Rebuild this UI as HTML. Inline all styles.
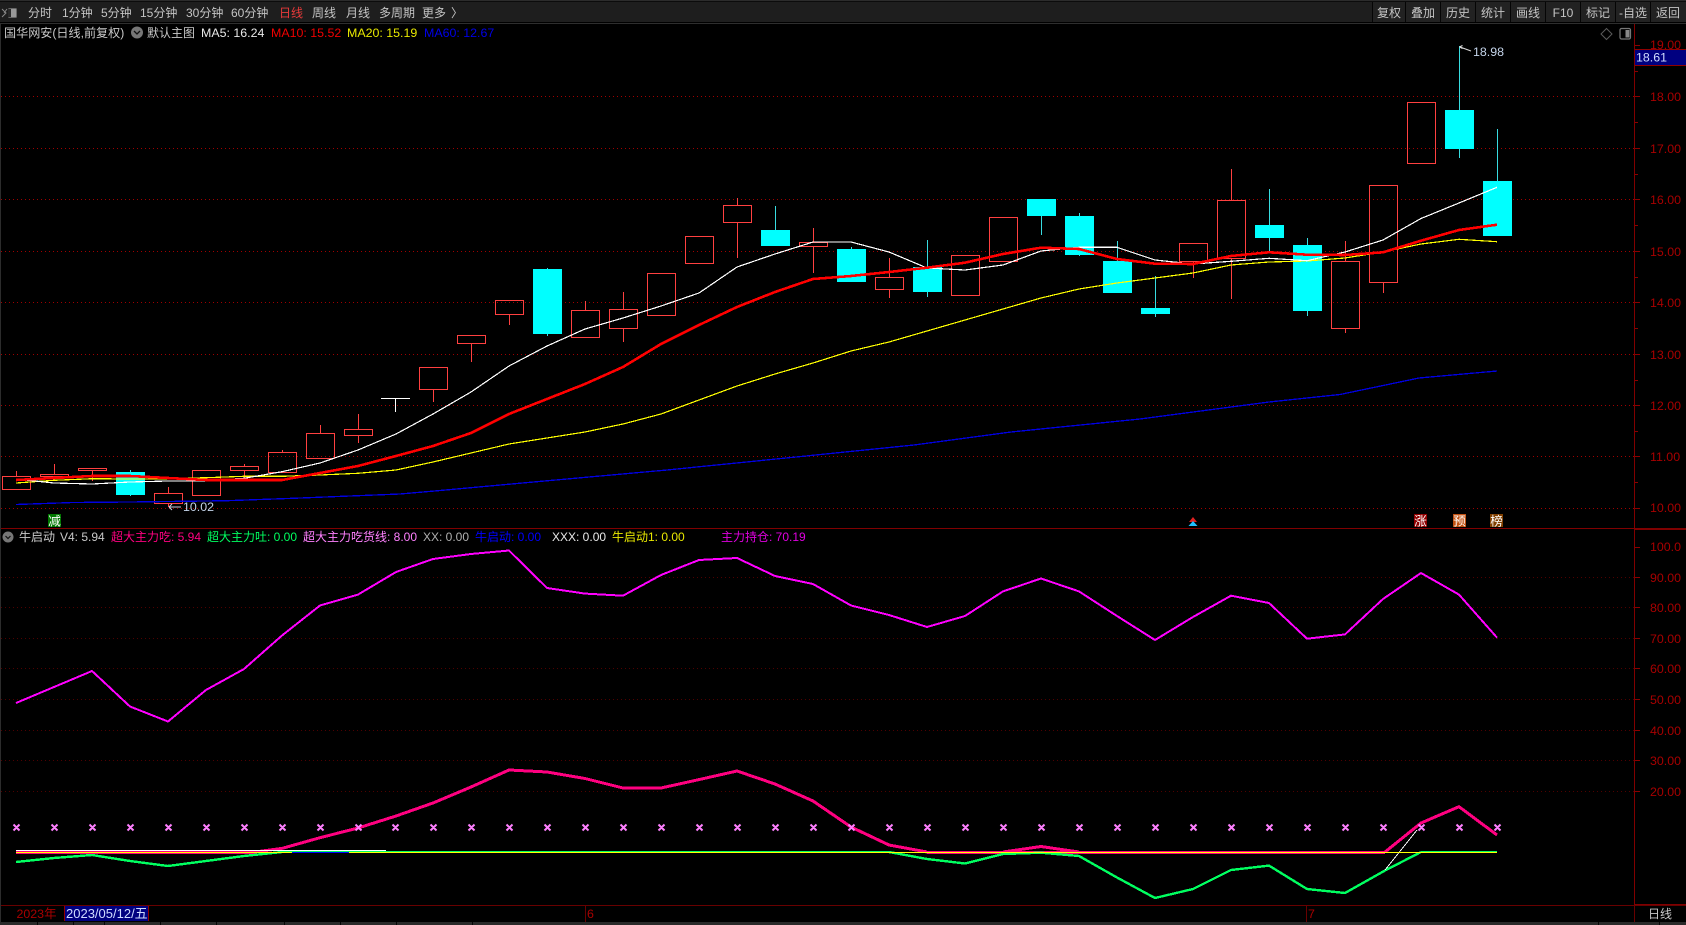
<!DOCTYPE html>
<html><head><meta charset="utf-8"><title>国华网安</title>
<style>
html,body{margin:0;padding:0;background:#000;width:1686px;height:925px;overflow:hidden}
svg{display:block;font-family:"Liberation Sans","Noto Sans CJK SC",sans-serif;font-size:12.4px}
.c{shape-rendering:crispEdges}
.ax{fill:#a80000;font-size:12.4px}
.tb{fill:#c4c4c4;font-size:12px}
.mid{text-anchor:middle}
</style></head><body>
<svg width="1686" height="925" viewBox="0 0 1686 925" xmlns="http://www.w3.org/2000/svg">
<rect width="1686" height="925" fill="#000"/>
<!-- top bar -->
<g class="c">
<rect width="1686" height="22" fill="#1e1e1e"/>
<rect width="1686" height="1" fill="#2c2c2c"/>
<rect y="1" width="1686" height="1" fill="#0c0c0c"/>
<rect y="22" width="1686" height="1" fill="#000"/>
<rect y="23" width="1686" height="1" fill="#2e2e2e"/>
<rect x="1372" y="2" width="314" height="20" fill="#222"/>
<path d="M1372.5 2V22M1405.5 2V22M1440.5 2V22M1475.5 2V22M1510.5 2V22M1545.5 2V22M1580.5 2V22M1615.5 2V22M1650.5 2V22" stroke="#050505"/>
</g>
<path d="M2 9l4 4-4 4M7 9l-3 4" fill="none" stroke="#888" stroke-width="1"/>
<rect x="8.5" y="8.5" width="8" height="9" fill="#999" stroke="#666" rx="1"/>
<rect x="8" y="9" width="3" height="8" fill="#2a2a2a"/>
<g class="tb">
<text x="28" y="17">分时</text><text x="62" y="17">1分钟</text><text x="101" y="17">5分钟</text><text x="140" y="17">15分钟</text><text x="186" y="17">30分钟</text><text x="231" y="17">60分钟</text><text x="279" y="17" style="fill:#e83a3a">日线</text><text x="312" y="17">周线</text><text x="346" y="17">月线</text><text x="379" y="17">多周期</text><text x="422" y="17">更多</text><text x="451" y="17">〉</text>
<text x="1389" y="17" class="mid">复权</text><text x="1423" y="17" class="mid">叠加</text><text x="1458" y="17" class="mid">历史</text><text x="1493" y="17" class="mid">统计</text><text x="1528" y="17" class="mid">画线</text><text x="1563" y="17" class="mid">F10</text><text x="1598" y="17" class="mid">标记</text><text x="1633" y="17" class="mid">-自选</text><text x="1668" y="17" class="mid">返回</text>
</g>
<!-- header row -->
<text x="4" y="37" fill="#c8c8c8" font-size="12.1">国华网安(日线,前复权)</text>
<circle cx="137" cy="32.5" r="6" fill="#777"/>
<path d="M134 31l3 3 3-3" fill="none" stroke="#111" stroke-width="1.3"/>
<text x="147" y="37" fill="#c8c8c8" font-size="12">默认主图</text>
<text x="201" y="37" fill="#e8e8e8">MA5: 16.24</text>
<text x="271" y="37" fill="#f00000">MA10: 15.52</text>
<text x="347" y="37" fill="#e8e800">MA20: 15.19</text>
<text x="424" y="37" fill="#0000e8">MA60: 12.67</text>
<path d="M1606.5 28.5l5.5 5.5-5.5 5.5-5.5-5.5z" fill="none" stroke="#5a5a5a"/>
<rect x="1620" y="28.5" width="10.5" height="10.5" rx="1.5" fill="none" stroke="#777" stroke-width="1.2"/>
<rect x="1625.5" y="30" width="4" height="7.5" fill="#888"/>
<!-- grids -->
<g class="c" fill="none">
<path d="M1 96.5H1634M1 148.5H1634M1 199.5H1634M1 251.5H1634M1 302.5H1634M1 354.5H1634M1 405.5H1634M1 456.5H1634M1 508.5H1634" stroke="#a00000" stroke-dasharray="1 3"/>
<path d="M1 577.5H1634M1 607.5H1634M1 638.5H1634M1 668.5H1634M1 699.5H1634M1 730.5H1634M1 760.5H1634M1 791.5H1634" stroke="#500000" stroke-dasharray="1 3"/>
<path d="M1634.5 24V922M0 528.5H1686M1635 529.5H1686M1635 904.5H1686" stroke="#800000"/>
<path d="M0 905.5H1686" stroke="#680000"/>
<path d="M0.5 24V922" stroke="#2c2c2c"/>
<path d="M1635 45.5h5M1635 96.5h5M1635 148.5h5M1635 199.5h5M1635 251.5h5M1635 302.5h5M1635 354.5h5M1635 405.5h5M1635 456.5h5M1635 508.5h5M1635 71.5h3M1635 122.5h3M1635 174.5h3M1635 225.5h3M1635 277.5h3M1635 328.5h3M1635 380.5h3M1635 431.5h3M1635 482.5h3M1635 547.5h5M1635 577.5h5M1635 607.5h5M1635 638.5h5M1635 668.5h5M1635 699.5h5M1635 730.5h5M1635 760.5h5M1635 791.5h5" stroke="#8c0000"/>
</g>
<!-- price axis labels -->
<g class="ax">
<text x="1650" y="49">19.00</text><text x="1650" y="101">18.00</text><text x="1650" y="153">17.00</text><text x="1650" y="204">16.00</text><text x="1650" y="256">15.00</text><text x="1650" y="307">14.00</text><text x="1650" y="359">13.00</text><text x="1650" y="410">12.00</text><text x="1650" y="461">11.00</text><text x="1650" y="512">10.00</text>
<text x="1650" y="551">100.0</text><text x="1650" y="582">90.00</text><text x="1650" y="612">80.00</text><text x="1650" y="643">70.00</text><text x="1650" y="673">60.00</text><text x="1650" y="704">50.00</text><text x="1650" y="735">40.00</text><text x="1650" y="765">30.00</text><text x="1650" y="796">20.00</text>
</g>
<g class="c">
<rect x="1635" y="50" width="51" height="15" fill="#000080"/>
<path d="M1635 49.5H1686M1635 65.5H1686" stroke="#900000"/>
</g>
<text x="1636" y="61.5" fill="#d0dcff">18.61</text>
<!-- candles -->
<g class="c" fill="none">
<path stroke="#ff4040" d="M2.5 476.5h28v13h-28zM16.5 471V476M40.5 474.5h28v2h-28zM54.5 464V474M78.5 468.5h28v2h-28zM92.5 471V481M154.5 493.5h28v10h-28zM168.5 487V493M168.5 504V507M192.5 470.5h28v25h-28zM230.5 466.5h28v4h-28zM244.5 464V466M244.5 471V480M268.5 452.5h28v20h-28zM282.5 450V452M306.5 433.5h28v25h-28zM320.5 425V433M344.5 429.5h28v6h-28zM358.5 414V429M358.5 436V443M419.5 367.5h28v22h-28zM433.5 390V402M457.5 335.5h28v8h-28zM471.5 344V362M495.5 300.5h28v14h-28zM509.5 315V325M571.5 310.5h28v27h-28zM585.5 301V310M609.5 309.5h28v19h-28zM623.5 292V309M623.5 329V342M647.5 273.5h28v42h-28zM685.5 236.5h28v27h-28zM723.5 205.5h28v17h-28zM737.5 198V205M737.5 223V258M799.5 242.5h28v4h-28zM813.5 228V242M813.5 247V273M875.5 277.5h28v12h-28zM889.5 258V277M889.5 290V298M951.5 255.5h28v40h-28zM989.5 217.5h28v44h-28zM1179.5 243.5h28v18h-28zM1193.5 262V278M1217.5 200.5h28v58h-28zM1231.5 169V200M1231.5 259V299M1331.5 261.5h28v67h-28zM1345.5 241V261M1345.5 329V333M1369.5 185.5h28v97h-28zM1383.5 283V293M1407.5 102.5h28v61h-28z"/>
<path stroke="#fff" d="M381 398.5h29M395.5 399V412"/>
<path stroke="#38dce0" d="M130.5 470V496M547.5 268V336M775.5 206V230M851.5 247V249M927.5 240V297M1041.5 216V235M1079.5 213V256M1117.5 241V261M1155.5 276V317M1269.5 189V252M1307.5 238V316M1459.5 46V110M1459.5 149V158M1497.5 129V181"/>
</g>
<g class="c" fill="#00ffff">
<rect x="116" y="472" width="29" height="23"/><rect x="533" y="269" width="29" height="65"/><rect x="761" y="230" width="29" height="16"/><rect x="837" y="249" width="29" height="33"/><rect x="913" y="267" width="29" height="25"/><rect x="1027" y="199" width="29" height="17"/><rect x="1065" y="216" width="29" height="39"/><rect x="1103" y="261" width="29" height="32"/><rect x="1141" y="308" width="29" height="6"/><rect x="1255" y="225" width="29" height="13"/><rect x="1293" y="245" width="29" height="66"/><rect x="1445" y="110" width="29" height="39"/><rect x="1483" y="181" width="29" height="55"/>
</g>
<!-- MA lines -->
<g class="c" fill="none" stroke-linejoin="round">
<polyline stroke="#0000e0" stroke-width="1.3" points="16,504.5 73,502.5 130,502 227,500.7 293,498.3 400,494 430,491.4 548,480.7 667,470 796,457 914,445 1011,432 1140,419 1269,402 1340,394.5 1419,378 1497,371"/>
<polyline stroke="#ffff00" stroke-width="1.2" points="16,483 54,480.3 92,478.7 130,479 168,478.7 206,477.7 244,476.3 282,476.3 320,475 358,473.3 396,470 433,462 471,453 509,444 547,438 585,432 623,424 661,414 699,400 737,386 775,374 813,363 851,351 889,342 927,331 965,320 1003,309 1041,298 1079,289 1117,283 1155,278 1193,273 1231,265 1269,262 1307,261 1345,258 1383,252 1421,244 1459,239.3 1497,241.7"/>
<polyline stroke="#ffffff" stroke-width="1.2" points="16,479 54,483 92,484 130,482 168,481 206,480.7 244,478.3 282,471.7 320,463 358,450 396,434 433,414 471,392 509,366 547,346 585,329 623,318 661,306 699,293 737,267 775,254 813,242 851,242 889,252 927,268 965,270 1003,265 1041,251 1079,247.3 1117,247.3 1155,260 1193,264 1231,261.3 1269,258.3 1307,260.7 1345,252 1383,240 1421,218.5 1459,203 1497,187.3"/>
<polyline stroke="#ff0000" stroke-width="2.6" points="16,480 54,478 92,476 130,476 168,478 206,480 244,480 282,480 320,473 358,466 396,456 433,446 471,433 509,414 547,399 585,384 623,367 661,344 699,325 737,307 775,292 813,279 851,276 889,272 927,267.7 965,262.7 1003,254 1041,247.7 1079,249 1117,259 1155,263.7 1193,264 1231,256 1269,252.3 1307,254.7 1345,255 1383,252.3 1421,240.7 1459,230 1497,224.7"/>
</g>
<!-- annotations -->
<path d="M1459.5 47l3-1.5M1459.5 47l3 1.5M1460 47l11 4" fill="none" stroke="#ddd"/>
<text x="1473" y="56" fill="#c4d4ea">18.98</text>
<path d="M169 507h12M169 507l3-3M169 507l3 3" fill="none" stroke="#ccd"/>
<text x="183" y="511" fill="#c4d4ea">10.02</text>
<g class="c">
<rect x="48" y="514" width="13" height="13" fill="#007800"/>
<rect x="1414" y="514" width="13" height="13" fill="#900000"/>
<rect x="1453" y="514" width="13" height="13" fill="#c05010"/>
<rect x="1490" y="514" width="13" height="13" fill="#804000"/>
</g>
<g fill="#fff" font-size="12.5" text-anchor="middle">
<text x="54.5" y="525.5">减</text><text x="1420.5" y="525.5">涨</text><text x="1459.5" y="525.5">预</text><text x="1496.5" y="525.5">榜</text>
</g>
<path d="M1193 517l4 5h-8z" fill="#e02020"/>
<path d="M1193 521l4.5 5h-9z" fill="#20c0ff"/>
<!-- lower header -->
<circle cx="8" cy="537" r="5.5" fill="#777"/>
<path d="M5.5 536l2.5 2.5 2.5-2.5" fill="none" stroke="#111" stroke-width="1.2"/>
<g font-size="12">
<text x="19" y="541" fill="#c8c8c8">牛启动</text>
<text x="60" y="541" fill="#c8c8c8">V4: 5.94</text>
<text x="111" y="541" fill="#ff0080">超大主力吃: 5.94</text>
<text x="207" y="541" fill="#00ff60">超大主力吐: 0.00</text>
<text x="303" y="541" fill="#ff80ff">超大主力吃货线: 8.00</text>
<text x="423" y="541" fill="#b0b0b0">XX: 0.00</text>
<text x="475" y="541" fill="#0000ff">牛启动: 0.00</text>
<text x="552" y="541" fill="#e8e8e8">XXX: 0.00</text>
<text x="612" y="541" fill="#e8e800">牛启动1: 0.00</text>
<text x="721" y="541" fill="#e000e0">主力持仓: 70.19</text>
</g>
<!-- lower lines -->
<g class="c" fill="none" stroke-linejoin="round">
<polyline stroke="#ff00ff" stroke-width="2" points="16,703 54,687 92,671 130,706.5 168,721.5 206,690 244,669 282,635.5 320,605.5 358,594.6 396,572 433,559 471,554 509,550.5 547,588 585,593.6 623,595.7 661,575 699,560 737,558 775,576 813,584 851,605.5 889,615 927,627 965,616 1003,591.4 1041,578.5 1079,591.4 1117,616 1155,640 1193,617 1231,595.7 1269,603 1307,638.7 1345,634.4 1383,599 1421,573 1459,594.6 1497,637.6"/>
<path stroke="#ff0080" stroke-width="3" d="M16 852.5H255M927 852.5H1385"/>
<polyline stroke="#ff0080" stroke-width="3" points="255,852 282,848.4 320,837.7 358,828 396,816 433,803 471,787 509,770 547,772 585,778.5 623,788 661,788 699,779.6 737,771 775,784 813,801 851,827 889,845 927,852"/>
<polyline stroke="#ff0080" stroke-width="3" points="1003,852 1041,846.5 1079,852"/>
<polyline stroke="#ff0080" stroke-width="3" points="1385,852 1421,823 1459,806.7 1497,835"/>
<polyline stroke="#00ff60" stroke-width="2.4" points="16,862 54,858 92,855 130,861 168,866 206,861 244,856 282,852"/>
<path stroke="#00ff60" d="M282 851.5H889M1421 851.5H1497"/>
<polyline stroke="#00ff60" stroke-width="2.4" points="889,852 927,859 965,863.5 1003,854 1041,852.7 1079,856 1117,877.5 1155,898 1193,889 1231,870 1269,865.6 1307,889 1345,893 1385,870.5 1421,852"/>
<path stroke="#ffffff" d="M16 850.5H386M1385 870L1417 830"/>
<path stroke="#ffff00" d="M16 852.5H1497"/>
<path stroke="#0000ff" d="M292 852.5H349"/>
</g>
<path fill="none" stroke="#ff80ff" stroke-width="2" d="M13.5 824.5l6 6m0-6l-6 6M51.5 824.5l6 6m0-6l-6 6M89.5 824.5l6 6m0-6l-6 6M127.5 824.5l6 6m0-6l-6 6M165.5 824.5l6 6m0-6l-6 6M203.5 824.5l6 6m0-6l-6 6M241.5 824.5l6 6m0-6l-6 6M279.5 824.5l6 6m0-6l-6 6M317.5 824.5l6 6m0-6l-6 6M355.5 824.5l6 6m0-6l-6 6M392.5 824.5l6 6m0-6l-6 6M430.5 824.5l6 6m0-6l-6 6M468.5 824.5l6 6m0-6l-6 6M506.5 824.5l6 6m0-6l-6 6M544.5 824.5l6 6m0-6l-6 6M582.5 824.5l6 6m0-6l-6 6M620.5 824.5l6 6m0-6l-6 6M658.5 824.5l6 6m0-6l-6 6M696.5 824.5l6 6m0-6l-6 6M734.5 824.5l6 6m0-6l-6 6M772.5 824.5l6 6m0-6l-6 6M810.5 824.5l6 6m0-6l-6 6M848.5 824.5l6 6m0-6l-6 6M886.5 824.5l6 6m0-6l-6 6M924.5 824.5l6 6m0-6l-6 6M962.5 824.5l6 6m0-6l-6 6M1000.5 824.5l6 6m0-6l-6 6M1038.5 824.5l6 6m0-6l-6 6M1076.5 824.5l6 6m0-6l-6 6M1114.5 824.5l6 6m0-6l-6 6M1152.5 824.5l6 6m0-6l-6 6M1190.5 824.5l6 6m0-6l-6 6M1228.5 824.5l6 6m0-6l-6 6M1266.5 824.5l6 6m0-6l-6 6M1304.5 824.5l6 6m0-6l-6 6M1342.5 824.5l6 6m0-6l-6 6M1380.5 824.5l6 6m0-6l-6 6M1418.5 824.5l6 6m0-6l-6 6M1456.5 824.5l6 6m0-6l-6 6M1494.5 824.5l6 6m0-6l-6 6"/>
<!-- bottom date row -->
<g class="c">
<rect x="65" y="906" width="83" height="15" fill="#000080"/>
<path d="M64.5 906V921M148.5 906V921" stroke="#900000"/>
<path d="M585.5 906V922M1306.5 906V922M1634.5 906V922" stroke="#680000"/>
<rect y="922" width="1686" height="3" fill="#2a2a2a"/>
<path d="M37.5 922V925M73.5 922V925M104.5 922V925M160.5 922V925M216.5 922V925M284.5 922V925M340.5 922V925M396.5 922V925M472.5 922V925M1598.5 922V925M1659.5 922V925" stroke="#050505"/>
</g>
<text x="16.5" y="918" fill="#a80000" font-size="12.4">2023年</text>
<text x="66" y="918" fill="#d0dcff" font-size="13">2023/05/12/五</text>
<text x="587" y="918" fill="#a80000">6</text>
<text x="1308" y="918" fill="#a80000">7</text>
<text x="1648" y="918" fill="#c8c8c8" font-size="12">日线</text>
</svg>
</body></html>
